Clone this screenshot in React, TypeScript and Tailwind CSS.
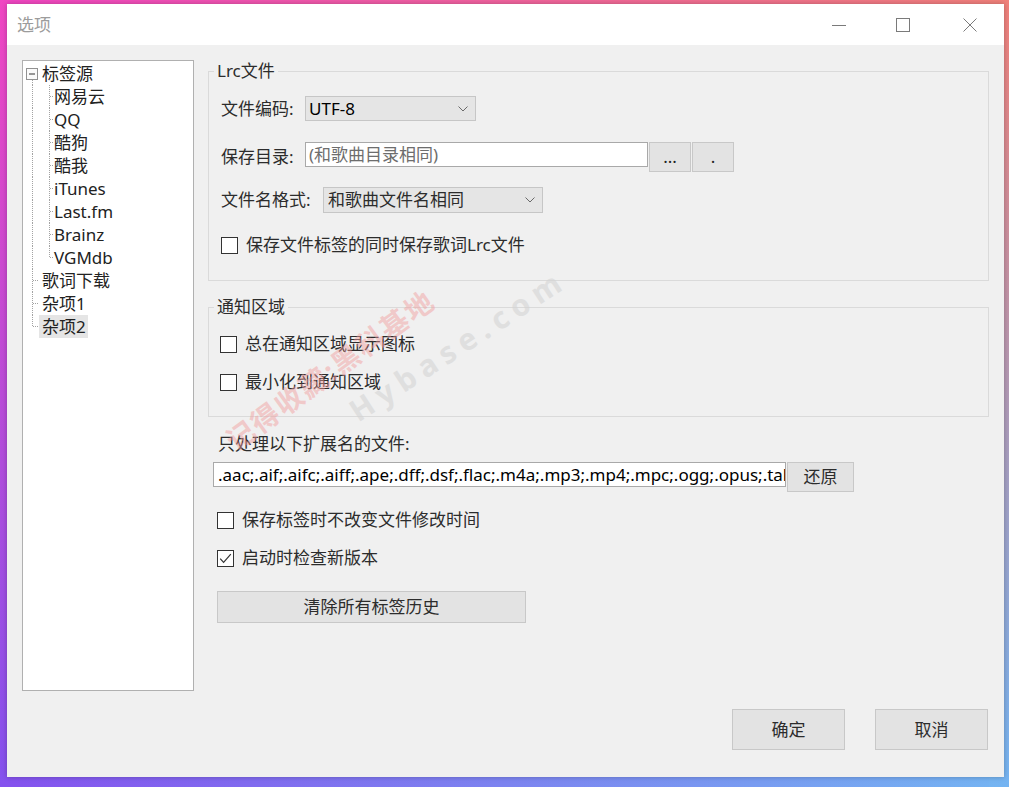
import React from "react";

type Kind = "root" | "top" | "topLast" | "child" | "childLast";

const LINE = "#a3a3a3";

function TreeLines({ kind }: { kind: Kind }) {
  if (kind === "root") {
    return (
      <svg width="16" height="23" viewBox="0 0 16 23" className="shrink-0">
        <rect x="3.5" y="6.5" width="11" height="11" fill="#fafafa" stroke="#919191" />
        <line x1="6" y1="12" x2="12" y2="12" stroke="#333" />
        <line x1="9.5" y1="18" x2="9.5" y2="23" stroke={LINE} strokeDasharray="1 1" />
      </svg>
    );
  }
  if (kind === "top" || kind === "topLast") {
    return (
      <svg width="16" height="23" viewBox="0 0 16 23" className="shrink-0">
        <line x1="9.5" y1="0" x2="9.5" y2={kind === "top" ? 23 : 12} stroke={LINE} strokeDasharray="1 1" />
        <line x1="10" y1="11.5" x2="16" y2="11.5" stroke={LINE} strokeDasharray="1 1" />
      </svg>
    );
  }
  return (
    <svg width="30" height="23" viewBox="0 0 30 23" className="shrink-0">
      <line x1="9.5" y1="0" x2="9.5" y2="23" stroke={LINE} strokeDasharray="1 1" />
      <line x1="26.5" y1="0" x2="26.5" y2={kind === "child" ? 23 : 12} stroke={LINE} strokeDasharray="1 1" />
      <line x1="27" y1="11.5" x2="30" y2="11.5" stroke={LINE} strokeDasharray="1 1" />
    </svg>
  );
}

const treeItems: { label: string; kind: Kind; selected?: boolean }[] = [
  { label: "标签源", kind: "root" },
  { label: "网易云", kind: "child" },
  { label: "QQ", kind: "child" },
  { label: "酷狗", kind: "child" },
  { label: "酷我", kind: "child" },
  { label: "iTunes", kind: "child" },
  { label: "Last.fm", kind: "child" },
  { label: "Brainz", kind: "child" },
  { label: "VGMdb", kind: "childLast" },
  { label: "歌词下载", kind: "top" },
  { label: "杂项1", kind: "top" },
  { label: "杂项2", kind: "topLast", selected: true },
];

function Chevron() {
  return (
    <svg width="10" height="6" viewBox="0 0 10 6" className="shrink-0">
      <path d="M0.5 0.5 L5 5 L9.5 0.5" fill="none" stroke="#6a6a6a" strokeWidth="1" />
    </svg>
  );
}

function Checkbox({ checked }: { checked?: boolean }) {
  return (
    <span className="w-[17px] h-[17px] border border-[#333333] bg-white flex items-center justify-center shrink-0">
      {checked && (
        <svg width="13" height="11" viewBox="0 0 13 11">
          <path d="M1.2 5.6 L4.6 9.4 L11.8 1.2" fill="none" stroke="#333" strokeWidth="1.2" />
        </svg>
      )}
    </span>
  );
}

function CheckRow({ label, checked, className }: { label: string; checked?: boolean; className: string }) {
  return (
    <div className={"h-[20px] flex items-center " + className}>
      <Checkbox checked={checked} />
      <span className="ml-[8px] whitespace-nowrap">{label}</span>
    </div>
  );
}

export default function App() {
  return (
    <div
      className="relative w-[1009px] h-[787px] overflow-hidden text-[17px] leading-[20px] text-[#2c2c2c] font-['Noto_Sans','Noto_Sans_CJK_SC',sans-serif] [background:linear-gradient(to_bottom,#f046c2,#8452ee)_left/20px_100%_no-repeat,linear-gradient(to_bottom,#f0807a,#74b4f2)_right/20px_100%_no-repeat,linear-gradient(to_right,#f046c2,#f0807a)_top/100%_50%_no-repeat,linear-gradient(to_right,#8452ee,#74b4f2)_bottom/100%_50%_no-repeat]"
    >
      <div className="ml-[7px] mt-[4px] w-[997px] h-[773px] bg-[#f0f0f0] flex flex-col shadow-[0_0_5px_rgba(0,0,0,0.25)]">
        {/* Title bar */}
        <div className="h-[41px] shrink-0 bg-white flex items-center">
          <span className="ml-[10px] text-[#9c9c9c]">选项</span>
          <div className="ml-auto mr-[27px] flex items-center">
            <svg width="14" height="14" viewBox="0 0 14 14" className="mr-[50px]">
              <line x1="0" y1="7.5" x2="14" y2="7.5" stroke="#7a7a7a" strokeWidth="1" />
            </svg>
            <svg width="14" height="14" viewBox="0 0 14 14" className="mr-[53px]">
              <rect x="0.5" y="0.5" width="13" height="13" fill="none" stroke="#7a7a7a" strokeWidth="1" />
            </svg>
            <svg width="14" height="14" viewBox="0 0 14 14">
              <path d="M0.5 0.5 L13.5 13.5 M13.5 0.5 L0.5 13.5" fill="none" stroke="#7a7a7a" strokeWidth="1" />
            </svg>
          </div>
        </div>

        {/* Body */}
        <div className="flex-1 flex flex-col pt-[15px] px-[15px] pb-[27px]">
          <div className="flex">
            {/* Tree */}
            <div className="w-[172px] h-[631px] shrink-0 bg-white border border-[#b0b0b0] pt-[1px] flex flex-col">
              {treeItems.map((it) => (
                <div key={it.label} className="h-[23px] flex items-center text-[#222]">
                  <TreeLines kind={it.kind} />
                  {it.kind === "child" || it.kind === "childLast" ? (
                    <span className="pl-[1px] whitespace-nowrap">{it.label}</span>
                  ) : (
                    <span
                      className={
                        "h-[23px] flex items-center pl-[3px] pr-[2px] whitespace-nowrap " +
                        (it.selected ? "bg-[#e5e5e5]" : "")
                      }
                    >
                      {it.label}
                    </span>
                  )}
                </div>
              ))}
            </div>

            {/* Right panel */}
            <div className="ml-[14px] flex-1 flex flex-col">
              <fieldset className="mt-[1px] border border-[#dadada] pl-[5px] pr-[10px] pb-[25px]">
                <legend className="px-[3px] leading-[20px]">Lrc文件</legend>
                <div className="ml-[7px] flex flex-col">
                  <div className="mt-[15px] h-[25px] flex items-center">
                    <span className="w-[84px] shrink-0">文件编码:</span>
                    <div className="w-[171px] h-[25px] border border-[#c6c6c6] bg-[#e5e5e5] flex items-center pl-[3px] pr-[7px]">
                      <span className="flex-1 text-black">UTF-8</span>
                      <Chevron />
                    </div>
                  </div>
                  <div className="mt-[21px] h-[30px] flex items-center">
                    <span className="w-[84px] shrink-0">保存目录:</span>
                    <div className="self-start w-[343px] h-[25px] border border-[#a9a9a9] bg-white flex items-center pl-[3px]">
                      <span className="text-[#6d6d6d]">(和歌曲目录相同)</span>
                    </div>
                    <button className="ml-[1px] w-[42px] h-[30px] border border-[#c8c8c8] bg-[#e3e3e3] flex items-center justify-center text-[#222]">
                      ...
                    </button>
                    <button className="ml-[1px] w-[42px] h-[30px] border border-[#c8c8c8] bg-[#e3e3e3] flex items-center justify-center text-[#222]">
                      .
                    </button>
                  </div>
                  <div className="mt-[15px] h-[26px] flex items-center">
                    <span className="w-[102px] shrink-0">文件名格式:</span>
                    <div className="w-[220px] h-[26px] border border-[#c6c6c6] bg-[#e5e5e5] flex items-center pl-[4px] pr-[7px]">
                      <span className="flex-1">和歌曲文件名相同</span>
                      <Chevron />
                    </div>
                  </div>
                  <CheckRow className="mt-[22px]" label="保存文件标签的同时保存歌词Lrc文件" />
                </div>
              </fieldset>

              <fieldset className="mt-[16px] border border-[#dadada] pl-[5px] pr-[10px] pb-[24px]">
                <legend className="px-[3px] leading-[20px]">通知区域</legend>
                <div className="ml-[6px] flex flex-col">
                  <CheckRow className="mt-[17px]" label="总在通知区域显示图标" />
                  <CheckRow className="mt-[18px]" label="最小化到通知区域" />
                </div>
              </fieldset>

              <div className="mt-[17px] ml-[10px] h-[20px]">只处理以下扩展名的文件:</div>
              <div className="mt-[8px] ml-[5px] flex items-start">
                <div className="w-[573px] h-[25px] border border-[#a9a9a9] bg-white flex items-center pl-[4px] overflow-hidden whitespace-nowrap text-black">
                  .aac;.aif;.aifc;.aiff;.ape;.dff;.dsf;.flac;.m4a;.mp3;.mp4;.mpc;.ogg;.opus;.tak;.tta;.wav;.wma;.wv
                </div>
                <button className="ml-[1px] w-[67px] h-[30px] border border-[#c8c8c8] bg-[#e3e3e3] flex items-center justify-center">
                  还原
                </button>
              </div>
              <CheckRow className="mt-[18px] ml-[9px]" label="保存标签时不改变文件修改时间" />
              <CheckRow className="mt-[18px] ml-[9px]" label="启动时检查新版本" checked />
              <button className="mt-[23px] ml-[9px] w-[309px] h-[32px] border border-[#c8c8c8] bg-[#e3e3e3] flex items-center justify-center">
                清除所有标签历史
              </button>
            </div>
          </div>

          <div className="mt-[18px] mr-[1px] flex justify-end gap-[30px]">
            <button className="w-[113px] h-[41px] border border-[#c8c8c8] bg-[#e3e3e3] flex items-center justify-center">
              确定
            </button>
            <button className="w-[113px] h-[41px] border border-[#c8c8c8] bg-[#e3e3e3] flex items-center justify-center">
              取消
            </button>
          </div>
        </div>
      </div>

      {/* Watermark */}
      <div className="pointer-events-none absolute left-[330px] top-[370px] -translate-x-1/2 -translate-y-1/2 -rotate-[36deg] whitespace-nowrap text-[28px] leading-[32px] font-bold tracking-[2px] text-[#f29a9a] opacity-45">
        记得收藏:黑科基地
      </div>
      <div className="pointer-events-none absolute left-[458px] top-[345px] -translate-x-1/2 -translate-y-1/2 -rotate-[33deg] whitespace-nowrap text-[30px] leading-[34px] font-bold tracking-[7px] text-[#d4d4d4] opacity-60">
        Hybase.com
      </div>
    </div>
  );
}
